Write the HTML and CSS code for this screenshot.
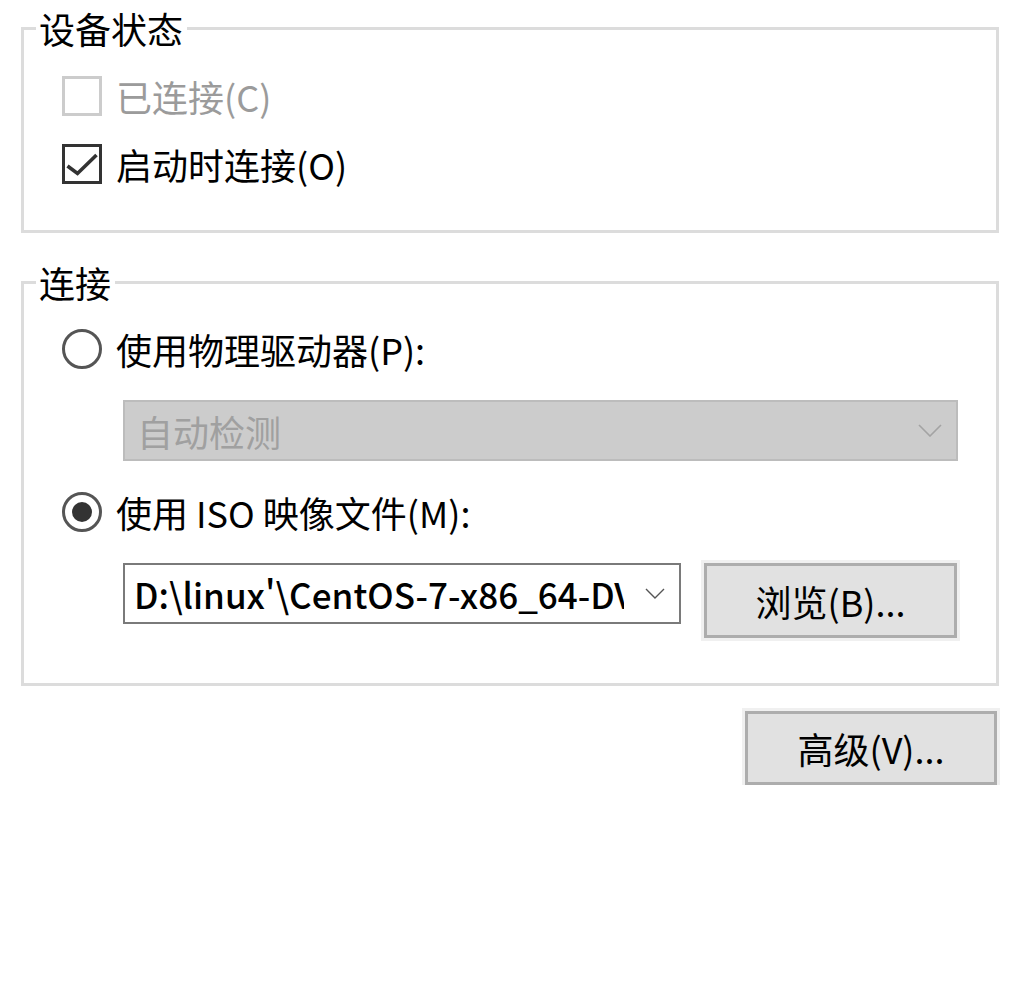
FILE: index.html
```html
<!DOCTYPE html>
<html lang="zh-CN">
<head>
<meta charset="utf-8">
<title>CD/DVD</title>
<link rel="stylesheet" href="styles.css">
</head>
<body>
<div class="dialog">
  <fieldset class="group group-status">
    <legend class="group-title">设备状态</legend>
    <div class="group-body">
      <div class="option disabled">
        <span class="checkbox checkbox-disabled"></span>
        <span class="label">已连接(C)</span>
      </div>
      <div class="option option-gap">
        <span class="checkbox checkbox-on">
          <svg width="34" height="34" viewBox="0 0 34 34"><polyline points="2.5,19 12.5,26.5 31.5,8" fill="none" stroke="#333" stroke-width="3.6"/></svg>
        </span>
        <span class="label">启动时连接(O)</span>
      </div>
    </div>
  </fieldset>

  <fieldset class="group group-conn">
    <legend class="group-title">连接</legend>
    <div class="group-body">
      <div class="option">
        <span class="radio"></span>
        <span class="label">使用物理驱动器(P):</span>
      </div>
      <div class="combo combo-disabled">
        <span class="combo-text">自动检测</span>
        <svg class="chev" width="24" height="13" viewBox="0 0 24 13"><polyline points="1,1 12,12 23,1" fill="none" stroke="#a3a3a3" stroke-width="1.6"/></svg>
      </div>
      <div class="option block-gap">
        <span class="radio radio-on"><span class="dot"></span></span>
        <span class="label">使用 ISO 映像文件(M):</span>
      </div>
      <div class="file-row block-gap">
        <div class="combo combo-file">
          <span class="combo-text file-text">D:\linux'\CentOS-7-x86_64-DV</span>
          <svg class="chev chev-small" width="20" height="11" viewBox="0 0 20 11"><polyline points="1,1 10,10 19,1" fill="none" stroke="#555" stroke-width="1.4"/></svg>
        </div>
        <div class="button browse">浏览(B)...</div>
      </div>
    </div>
  </fieldset>

  <div class="actions">
    <div class="button advanced">高级(V)...</div>
  </div>
</div>
</body>
</html>
```

FILE: styles.css
```css
html, body {
  margin: 0;
  padding: 0;
  background: #ffffff;
}

body {
  font-family: "Noto Sans CJK SC", "Noto Sans", sans-serif;
  font-size: 36px;
  color: #000000;
}

.dialog {
  padding: 10px 0 0 21px;
  width: 978px;
}

.group {
  margin: 0;
  padding: 0;
  min-inline-size: 0;
  border: 3px solid #dcdcdc;
}

.group-conn {
  margin-top: 31px;
}

.group-title {
  margin-left: 12px;
  padding: 0 4px 0 3px;
  line-height: 36px;
  height: 36px;
}

.group-body {
  padding: 30px 0 0 38px;
}

.group-status .group-body {
  padding-bottom: 46px;
}

.group-conn .group-body {
  padding-top: 29px;
  padding-bottom: 45px;
}

.option {
  display: flex;
  align-items: center;
  height: 40px;
}

.option-gap {
  margin-top: 28px;
}

.block-gap {
  margin-top: 31px;
}

.label {
  margin-left: 14px;
  line-height: 40px;
  white-space: nowrap;
}

.disabled .label {
  color: #9b9b9b;
}

.checkbox {
  box-sizing: border-box;
  width: 40px;
  height: 40px;
  border: 3px solid #333333;
  background: #ffffff;
  display: flex;
  align-items: center;
  justify-content: center;
  flex: none;
}

.checkbox-disabled {
  border-color: #cccccc;
}

.radio {
  box-sizing: border-box;
  width: 40px;
  height: 40px;
  border: 3px solid #555555;
  border-radius: 50%;
  display: flex;
  align-items: center;
  justify-content: center;
  flex: none;
}

.dot {
  width: 20px;
  height: 20px;
  border-radius: 50%;
  background: #333333;
}

.combo {
  box-sizing: border-box;
  display: flex;
  align-items: center;
  height: 61px;
  margin-top: 31px;
  margin-left: 61px;
  width: 835px;
  border: 2px solid #bcbcbc;
  background: #cccccc;
  padding: 0 14px 0 12px;
}

.combo-disabled .combo-text {
  color: #a0a0a0;
}

.combo-text {
  flex: 1;
  white-space: nowrap;
  line-height: 44px;
}

.chev {
  flex: none;
  margin-left: 8px;
}

.file-row {
  display: flex;
  align-items: flex-start;
  margin-left: 61px;
  height: 75px;
}

.combo-file {
  margin: 0;
  width: 558px;
  height: 61px;
  background: #ffffff;
  border: 2px solid #7a7a7a;
  padding: 0 14px 0 9px;
}

.file-text {
  flex: none;
  width: 490px;
  overflow: hidden;
  font-size: 35px;
  font-weight: 500;
}

.chev-small {
  margin-left: auto;
}

.button {
  box-sizing: border-box;
  display: flex;
  align-items: center;
  justify-content: center;
  background: #e1e1e1;
  border: 3px solid #adadad;
  box-shadow: 0 0 0 3px #f0f0f0;
  white-space: nowrap;
}

.browse {
  margin-left: 23px;
  width: 253px;
  height: 75px;
}

.actions {
  display: flex;
  justify-content: flex-end;
  margin-top: 25px;
  padding-right: 2px;
}

.advanced {
  width: 252px;
  height: 74px;
}
```
